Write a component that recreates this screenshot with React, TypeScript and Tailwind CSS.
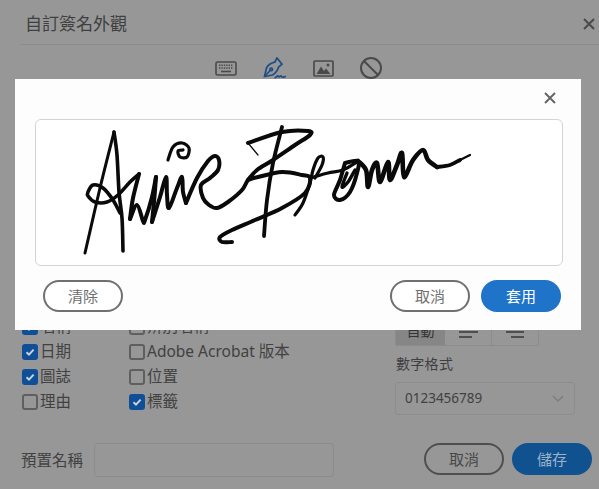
type Pt = [number, number];

// smooth a list of points into a bezier path (catmull-rom)
function smooth(pts: Pt[]) {
  let d = `M${pts[0][0]} ${pts[0][1]}`;
  for (let i = 0; i < pts.length - 1; i++) {
    const p0 = pts[i - 1] || pts[i];
    const p1 = pts[i];
    const p2 = pts[i + 1];
    const p3 = pts[i + 2] || p2;
    const c1x = p1[0] + (p2[0] - p0[0]) / 6;
    const c1y = p1[1] + (p2[1] - p0[1]) / 6;
    const c2x = p2[0] - (p3[0] - p1[0]) / 6;
    const c2y = p2[1] - (p3[1] - p1[1]) / 6;
    d += ` C${c1x.toFixed(1)} ${c1y.toFixed(1)} ${c2x.toFixed(1)} ${c2y.toFixed(1)} ${p2[0]} ${p2[1]}`;
  }
  return d;
}

const strokes: { pts: Pt[]; w: number }[] = [
  // A
  { w: 3, pts: [[85, 253], [100, 188], [114, 132]] },
  { w: 3.6, pts: [[114, 132], [117, 155], [119, 192], [122, 218], [123, 251]] },
  { w: 3.6, pts: [[120, 213], [113, 200], [103, 188], [93, 185], [88, 192], [88, 196], [95, 202], [107, 202], [118, 195], [130, 182], [139, 174]] },
  // n n
  { w: 4, pts: [[139, 174], [133, 198], [130, 219]] },
  { w: 4, pts: [[130, 219], [137, 205], [143, 221], [145, 220], [152, 197], [156, 177]] },
  { w: 4, pts: [[156, 177], [154, 202], [152, 222]] },
  { w: 4, pts: [[152, 222], [160, 197], [166, 177], [167, 195], [169, 208], [177, 188], [182, 177], [183, 192], [186, 203]] },
  // e running into B
  { w: 4, pts: [[186, 203], [197, 178], [208, 161], [215, 156], [219, 160], [218, 170], [210, 178], [201, 185], [203, 198], [209, 205], [217, 208], [228, 202], [242, 190], [248, 180], [257, 170], [273, 160], [295, 145], [310, 135], [308, 131], [282, 132], [248, 143]] },
  // i dot
  { w: 3.2, pts: [[168, 160], [173, 147], [182, 143], [189, 148], [187, 157], [180, 157], [178, 151], [183, 150]] },
  // B
  { w: 1.2, pts: [[248, 143], [258, 155]] },
  { w: 4, pts: [[248, 180], [258, 177], [282, 172], [302, 175], [310, 178], [305, 193], [282, 208], [255, 220], [232, 230], [220, 237], [222, 242], [232, 242]] },
  { w: 3.8, pts: [[282, 127], [273, 163], [267, 200], [264, 236]] },
  // r
  { w: 3.2, pts: [[295, 215], [303, 203], [310, 183], [313, 170], [318, 158], [323, 157], [322, 165], [315, 178]] },
  { w: 3.2, pts: [[310, 178], [328, 173], [343, 170], [357, 162]] },
  // o
  { w: 4, pts: [[345, 163], [340, 180], [334, 195], [340, 200], [350, 192], [357, 173], [358, 161], [345, 163]] },
  { w: 3.4, pts: [[347, 173], [342, 187], [348, 182], [355, 170]] },
  // w n tail
  { w: 4.6, pts: [[358, 161], [366, 170], [368, 187], [372, 170], [377, 163], [380, 182], [388, 162], [390, 180], [397, 165], [402, 153], [404, 177], [413, 160], [423, 150], [428, 160], [437, 167]] },
  { w: 3.8, pts: [[437, 167], [450, 165], [460, 160]] },
  { w: 2.2, pts: [[458, 161], [470, 155]] },
];

function Check({ on, label }: { on?: boolean; label: string }) {
  return (
    <div className="flex items-center h-[25px] gap-[2px]">
      {on ? (
        <span className="w-4 h-4 rounded-[3px] bg-[#0f4f98] flex items-center justify-center">
          <svg width="12" height="12" viewBox="0 0 12 12" fill="none">
            <path d="M2.5 6.2 5 8.6 9.6 3.6" stroke="#c9d2dc" strokeWidth="2" />
          </svg>
        </span>
      ) : (
        <span className="w-4 h-4 rounded-[3px] border-2 border-[#5f5f5f]" />
      )}
      <span className="text-[15.5px] text-[#414141]">{label}</span>
    </div>
  );
}

function PillButton({ label, primary, dim }: { label: string; primary?: boolean; dim?: boolean }) {
  if (primary) {
    return (
      <button className={`w-20 h-8 rounded-full text-[15px] ${dim ? "bg-[#10528f] text-[#9db2c8]" : "bg-[#1f74c9] text-white"}`}>
        {label}
      </button>
    );
  }
  return (
    <button className={`w-20 h-8 rounded-full border-2 text-[15px] ${dim ? "border-[#4f4f4f] text-[#484848]" : "border-[#707070] text-[#707070] bg-white"}`}>
      {label}
    </button>
  );
}

function CloseIcon({ color }: { color: string }) {
  return (
    <svg width="12" height="12" viewBox="0 0 12 12" fill="none" stroke={color} strokeWidth="2">
      <path d="M1 1 11 11M11 1 1 11" />
    </svg>
  );
}

export default function App() {
  return (
    <div
      className="relative w-[599px] h-[489px] overflow-hidden bg-[#979797] flex flex-col"
      style={{ fontFamily: '"Noto Sans", "Noto Sans CJK TC", sans-serif' }}
    >
      {/* dialog behind */}
      <div className="h-[45px] ml-5 pl-[5px] pr-1 pt-1 flex items-center justify-between border-b border-[#8c8c8c]">
        <span className="text-[17px] text-[#3f3f3f]">自訂簽名外觀</span>
        <CloseIcon color="#4a4a4a" />
      </div>

      <div className="flex justify-center gap-[26px] pr-[2px] mt-3 h-[22px] items-center">
        <svg width="22" height="15" viewBox="0 0 22 15" fill="none">
          <rect x="1" y="1" width="20" height="13" rx="1.5" stroke="#4a4a4a" strokeWidth="1.6" />
          <path d="M4 4.2h14M4 7h14" stroke="#4a4a4a" strokeWidth="1.6" strokeDasharray="1.4 1" />
          <path d="M6 10.5h10" stroke="#4a4a4a" strokeWidth="1.6" />
        </svg>
        <svg width="24" height="22" viewBox="0 0 24 22" fill="none" stroke="#1d4f86" strokeWidth="1.7">
          <path d="M14 1 11.8 5.2C8 6 5 8 3.5 11L1.5 19.5 9.5 18C12.5 16.5 14.6 13.5 15.6 10L19 7.2Z" />
          <path d="M1.5 19.5 7.2 13.5" />
          <circle cx="8.2" cy="12.4" r="1.3" />
          <path d="M11.5 21C14 20.5 14.2 17.5 15.5 19.5 16.5 21 17.5 17.5 18.5 19.5 19.5 21 21 19.5 23 19.5" />
        </svg>
        <svg width="21" height="17" viewBox="0 0 21 17" fill="none">
          <rect x="1" y="1" width="19" height="15" rx="1" stroke="#4a4a4a" strokeWidth="1.7" />
          <path d="M3.5 14 8 6.5 11 11 13 8.5 17.5 14Z" fill="#4a4a4a" />
          <circle cx="15" cy="5" r="1.5" fill="#4a4a4a" />
        </svg>
        <svg width="22" height="22" viewBox="0 0 22 22" fill="none" stroke="#4a4a4a" strokeWidth="2">
          <circle cx="11" cy="11" r="10" />
          <path d="M4 4 18 18" />
        </svg>
      </div>

      <div className="flex mt-[235px] pl-[22px]">
        <div className="w-[107px] flex flex-col">
          <Check on label="名稱" />
          <Check on label="日期" />
          <Check on label="圖誌" />
          <Check label="理由" />
        </div>
        <div className="w-[266px] flex flex-col">
          <Check label="辨別名稱" />
          <Check label="Adobe Acrobat 版本" />
          <Check label="位置" />
          <Check on label="標籤" />
        </div>
        <div className="w-[180px] flex flex-col">
          <div className="flex w-[144px] h-[32px] border border-[#8c8c8c] rounded-[2px]">
            <div className="w-[49px] bg-[#868686] flex items-center justify-center text-[14px] text-[#333333]">自動</div>
            <div className="flex-1 border-r border-[#8c8c8c] flex flex-col items-start justify-end pb-[7px] pl-[14px] gap-[3px]">
              <span className="w-[19px] h-[2px] bg-[#4f4f4f]" />
              <span className="w-[13px] h-[2px] bg-[#4f4f4f]" />
            </div>
            <div className="flex-1 flex flex-col items-end justify-end pb-[7px] pr-[14px] gap-[3px]">
              <span className="w-[18px] h-[2px] bg-[#4f4f4f]" />
              <span className="w-[13px] h-[2px] bg-[#4f4f4f]" />
            </div>
          </div>
          <span className="mt-[7px] pl-[1px] h-[24px] text-[14px] text-[#3f3f3f] tracking-[0.3px]">數字格式</span>
          <div className="mt-[5px] h-[33px] border border-[#8c8c8c] rounded-[3px] flex items-center justify-between pl-[9px] pr-[10px]">
            <span className="text-[13.5px] text-[#414141]">0123456789</span>
            <svg width="12" height="7" viewBox="0 0 12 7" fill="none" stroke="#7e7e7e" strokeWidth="1.5">
              <path d="M1 1 6 6 11 1" />
            </svg>
          </div>
        </div>
      </div>

      <div className="flex items-start mt-[28px] pl-[21px] pr-[7px]">
        <span className="text-[15.5px] leading-[34px] text-[#414141] w-[73px]">預置名稱</span>
        <div className="w-[240px] h-[34px] border border-[#8c8c8c] rounded-[3px]" />
        <div className="ml-auto flex gap-2">
          <PillButton dim label="取消" />
          <PillButton dim primary label="儲存" />
        </div>
      </div>

      {/* signature modal on top */}
      <div className="absolute left-[15px] top-[79px] w-[566px] h-[251px] bg-[#fdfdfd] flex flex-col pt-[13px] pl-5 pr-[18px]">
        <div className="flex justify-end pr-[7px] h-[13px]">
          <CloseIcon color="#666666" />
        </div>
        <div className="mt-[14px] h-[147px] bg-white border border-[#d4d4d4] rounded-md overflow-hidden">
          <svg className="blur-[0.4px]" width="526" height="145" viewBox="36 120 526 145" fill="none" stroke="#0a0a0a" strokeLinecap="round" strokeLinejoin="round">
            {strokes.map((s, i) => (
              <path key={i} d={smooth(s.pts)} strokeWidth={s.w} />
            ))}
          </svg>
        </div>
        <div className="flex items-center mt-[14px] pl-2 pr-[2px]">
          <PillButton label="清除" />
          <div className="ml-auto flex gap-[11px]">
            <PillButton label="取消" />
            <PillButton primary label="套用" />
          </div>
        </div>
      </div>
    </div>
  );
}
